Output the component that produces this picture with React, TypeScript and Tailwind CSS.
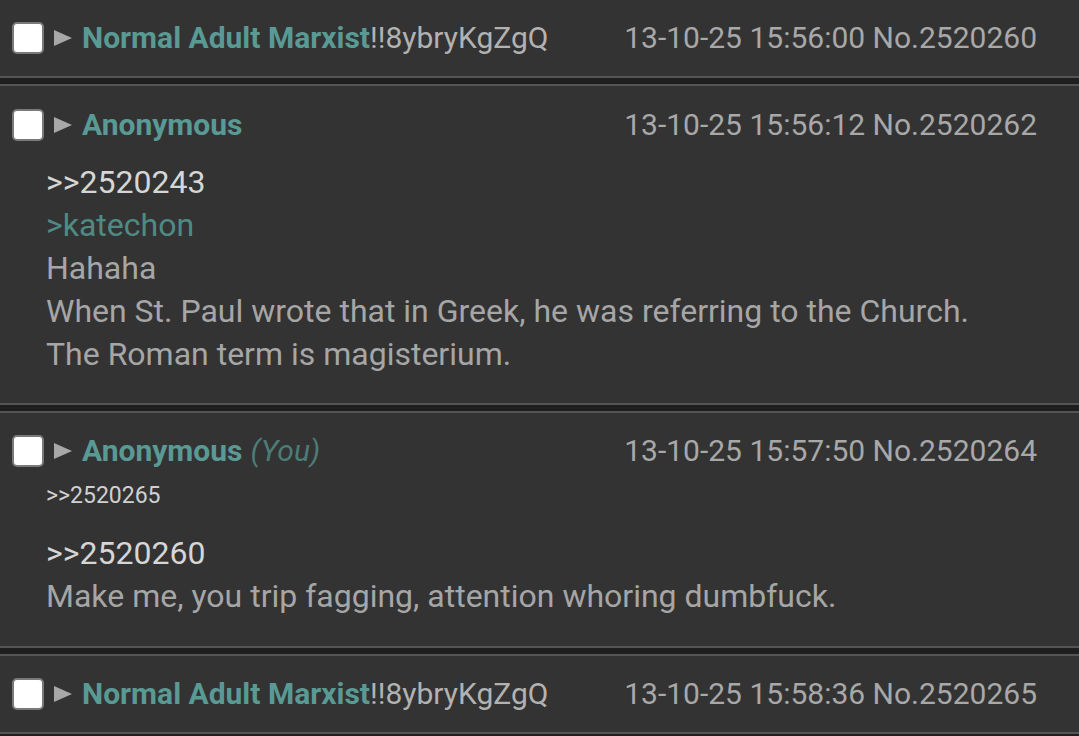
import React from "react";

const font = { fontFamily: "Roboto, 'Noto Sans', sans-serif" };

function Header({ name, trip, you, time }: { name: string; trip?: string; you?: boolean; time: string }) {
  return (
    <div className="flex items-center h-[32px] pl-[12px] pr-[42px]">
      <div className="w-[32px] h-[32px] rounded-[5px] bg-white border-[2px] border-[#7a7a7a] shrink-0" />
      <svg width="20" height="20" viewBox="0 0 20 20" className="ml-[9px] shrink-0">
        <polygon points="1,2 19,10 1,18" fill="#a8a8a8" />
      </svg>
      <div className="ml-[9px] text-[30px] leading-none whitespace-nowrap">
        <span className="font-bold text-[#5a9a94]">{name}</span>
        {trip && <span className="text-[#b2b2b2]">{trip}</span>}
        {you && <span className="italic text-[#4d7c77] ml-[8px]">(You)</span>}
      </div>
      <div className="ml-auto text-[30px] leading-none text-[#a8a8a8] whitespace-nowrap">{time}</div>
    </div>
  );
}

export default function App() {
  return (
    <div className="w-[1079px] h-[736px] overflow-hidden bg-[#1e1e1e]" style={font}>
      <div className="bg-[#333333] border-b-2 border-[#555555] pt-[22px] pb-[22px]">
        <Header name="Normal Adult Marxist" trip="!!8ybryKgZgQ" time="13-10-25 15:56:00 No.2520260" />
      </div>
      <div className="mt-[6px] bg-[#333333] border-y-2 border-[#555555] pt-[23px] pb-[27px]">
        <Header name="Anonymous" time="13-10-25 15:56:12 No.2520262" />
        <div className="mt-[20px] pl-[46px] text-[32px] leading-[43px] text-[#a6a6a6]">
          <div className="text-[#d6d6d6]">&gt;&gt;2520243</div>
          <div className="text-[#4f8b85]">&gt;katechon</div>
          <div>Hahaha</div>
          <div>When St. Paul wrote that in Greek, he was referring to the Church.</div>
          <div>The Roman term is magisterium.</div>
        </div>
      </div>
      <div className="mt-[6px] bg-[#333333] border-y-2 border-[#555555] pt-[22px] pb-[28px]">
        <Header name="Anonymous" you time="13-10-25 15:57:50 No.2520264" />
        <div className="mt-[14px] pl-[46px] text-[23px] leading-[30px] text-[#d0d0d0]">&gt;&gt;2520265</div>
        <div className="mt-[21px] pl-[46px] text-[32px] leading-[43px] text-[#a6a6a6]">
          <div className="text-[#d6d6d6]">&gt;&gt;2520260</div>
          <div>Make me, you trip fagging, attention whoring dumbfuck.</div>
        </div>
      </div>
      <div className="mt-[6px] bg-[#333333] border-y-2 border-[#555555] pt-[22px] pb-[22px]">
        <Header name="Normal Adult Marxist" trip="!!8ybryKgZgQ" time="13-10-25 15:58:36 No.2520265" />
      </div>
    </div>
  );
}
